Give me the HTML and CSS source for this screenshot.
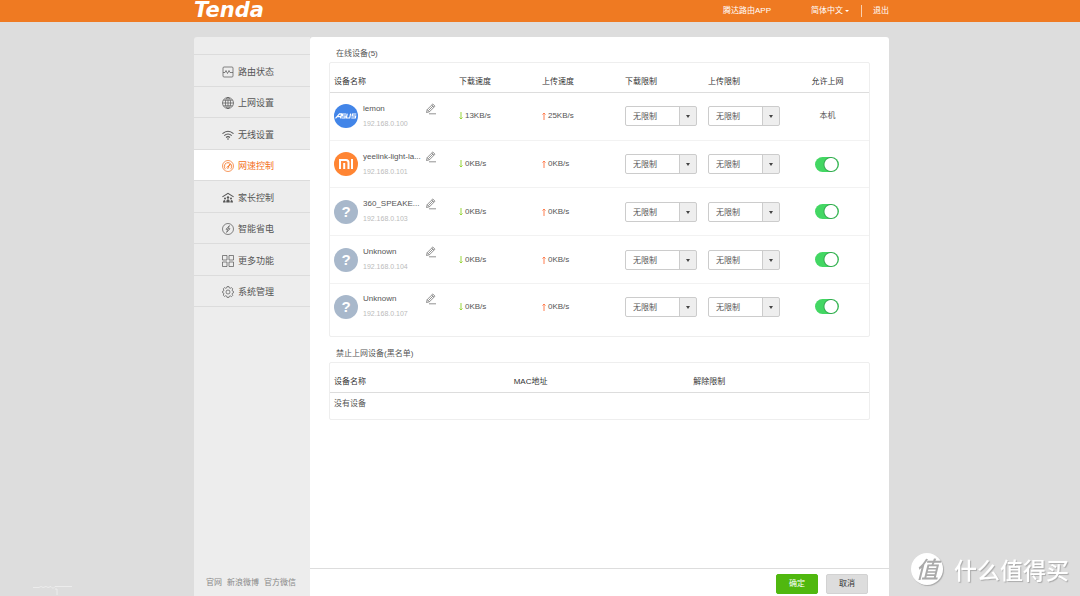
FILE: index.html
```html
<!DOCTYPE html>
<html lang="zh-CN">
<head>
<meta charset="utf-8">
<title>Tenda</title>
<link rel="stylesheet" href="styles.css">
</head>
<body>
<header class="topbar">
  <div class="wrap topbar-inner">
    <a class="logo" href="#">Tenda</a>
    <nav class="top-links">
      <a class="app-link" href="#">腾达路由APP</a>
      <button class="lang" type="button">简体中文<span class="caret"></span></button>
      <a class="logout" href="#">退出</a>
    </nav>
  </div>
</header>

<div class="wrap page">
  <aside class="sidebar">
    <nav class="menu">
      <a href="#"><svg viewBox="0 0 12 12"><rect x="1" y="1" width="10" height="10" rx="1"/><path d="M1 6.500h2l1-2 1.500 3 1.500-3 1 2h3"/></svg>路由状态</a>
      <a href="#"><svg viewBox="0 0 12 12"><circle cx="6" cy="6" r="5.500"/><ellipse cx="6" cy="6" rx="2.600" ry="5.500"/><path d="M6 .5v11M.5 6h11M1.300 3.200h9.400M1.300 8.800h9.400"/></svg>上网设置</a>
      <a href="#"><svg viewBox="0 0 12 12"><path class="bold" d="M.5 4.600Q6-.2 11.500 4.600M2.300 6.600Q6 3.300 9.700 6.600M4.100 8.500Q6 6.800 7.900 8.500"/><circle class="solid" cx="6" cy="10" r=".8"/></svg>无线设置</a>
      <a class="active" href="#"><svg viewBox="0 0 12 12"><circle cx="6" cy="6" r="5.500"/><path d="M3.600 9.200A3.700 3.700 0 1 1 8.400 9.200M2.300 6h1M6 2.300v1M3.400 3.400l.7.7M9.700 6h-1"/><path class="bold" d="M8.400 3.800L6 7"/><circle cx="5.800" cy="7.500" r=".9"/></svg>网速控制</a>
      <a href="#"><svg viewBox="0 0 12 12"><path class="bold" d="M.4 4.900L6 1.400l5.600 3.500"/><circle class="solid" cx="6" cy="5.500" r="1.200"/><circle class="solid" cx="3" cy="6.500" r="1"/><circle class="solid" cx="9" cy="6.500" r="1"/><path class="solid" d="M4.200 10.500c0-4.300 3.600-4.300 3.600 0zM1 10.500c0-3.400 2.700-3.400 2.700 0zM8.300 10.500c0-3.400 2.700-3.400 2.700 0z"/></svg>家长控制</a>
      <a href="#"><svg viewBox="0 0 12 12"><circle cx="6" cy="6" r="5.500"/><path d="M7.400 2.600L4 6.300h1.800L4.600 9.400 8 5.700H6.200z"/></svg>智能省电</a>
      <a href="#"><svg viewBox="0 0 12 12"><path d="M.5.500h4.500v4.500H.5zM7 .5h4.500v4.500H7zM.5 7h4.500v4.500H.5zM7 7h4.500v4.500H7z"/></svg>更多功能</a>
      <a href="#"><svg viewBox="0 0 12 12"><path d="M5 .6h2l.3 1.300 1 .4 1.200-.7 1.300 1.300-.7 1.200.4 1 1 .3v1.400l-1 .3-.4 1 .7 1.200-1.300 1.300-1.200-.7-1 .4L7 11.400H5l-.3-1.300-1-.4-1.200.7-1.300-1.300.7-1.200-.4-1-1-.3V5.400l1-.3.4-1-.7-1.200 1.300-1.300 1.200.7 1-.4z"/><circle cx="6" cy="6" r="2"/></svg>系统管理</a>
    </nav>
    <div class="site-links"><a href="#">官网</a><a href="#">新浪微博</a><a href="#">官方微信</a></div>
  </aside>

  <main class="content">
    <div class="panels">
      <section>
        <h2>在线设备(5)</h2>
        <div class="panel online">
          <table class="devices">
            <thead><tr><th class="name-col">设备名称</th><th>下载速度</th><th>上传速度</th><th>下载限制</th><th>上传限制</th><th class="allow">允许上网</th></tr></thead>
            <tbody id="device-rows"></tbody>
          </table>
        </div>
      </section>
      <section>
        <h2>禁止上网设备(黑名单)</h2>
        <div class="panel">
          <table class="blocked">
            <thead><tr><th>设备名称</th><th>MAC地址</th><th>解除限制</th></tr></thead>
            <tbody><tr><td colspan="3">没有设备</td></tr></tbody>
          </table>
        </div>
      </section>
    </div>
    <footer class="actions"><button class="ok" type="button">确定</button><button type="button">取消</button></footer>
  </main>
</div>

<svg class="trace" viewBox="0 0 40 10"><path d="M0 1.500h6l2-1 2 1 3-1 2 1 3-1 2 2 2-2h17M22 3h2v6"/></svg>
<div class="watermark"><span class="badge">值</span><span>什么值得买</span></div>
<script src="app.js"></script>
</body>
</html>
```

FILE: styles.css
```css
* { box-sizing: border-box; }

body {
  margin: 0;
  min-height: 100vh;
  display: flex;
  flex-direction: column;
  background: #ddd;
  color: #555;
  font: 8px/12px "Liberation Sans", "Noto Sans CJK SC", sans-serif;
}

a { color: inherit; text-decoration: none; }
button, select { font: inherit; color: inherit; }

.wrap {
  width: 100%;
  max-width: 698px;
  margin: 0 auto;
  padding-left: 3px;
  display: flex;
}

.topbar { background: #ef7a22; color: #fff; }
.topbar-inner { height: 22px; align-items: center; justify-content: space-between; }
.logo { padding-bottom: 2px; font: italic bold 21px/20px "DejaVu Sans", sans-serif; }
.top-links { display: flex; align-items: center; }
.app-link { margin-right: 40px; }
.lang {
  display: flex;
  align-items: center;
  gap: 2px;
  padding: 0 12px 0 0;
  border: 0;
  border-right: 1px solid #f9d0b0;
  background: none;
}
.caret {
  border: 2px solid transparent;
  border-top-color: currentColor;
  border-bottom: 0;
}
.logout { padding-left: 11px; }

.page { flex: 1; margin-top: 15px; }

.sidebar {
  width: 116px;
  display: flex;
  flex-direction: column;
  justify-content: space-between;
  padding-top: 17px;
  background: #ededed;
  border-radius: 3px 0 0 0;
}
.menu {
  height: 253px;
  display: grid;
  grid-auto-rows: 1fr;
  border-top: 1px solid #dcdcdc;
  font-size: 9px;
}
.menu a {
  display: flex;
  align-items: center;
  gap: 4px;
  padding: 3px 0 0 28px;
  border-bottom: 1px solid #dcdcdc;
}
.menu .active { background: #fff; color: #f36f1b; }
.menu svg {
  width: 12px;
  height: 12px;
  fill: none;
  stroke: currentColor;
  stroke-width: .7;
}
.menu .bold { stroke-width: 1.1; }
.menu .solid { fill: currentColor; stroke: none; }
.site-links { display: flex; gap: 5px; padding: 0 12px 7px; color: #888; }

.content {
  flex: 1;
  display: flex;
  flex-direction: column;
  background: #fff;
  border-radius: 3px 3px 0 0;
}
.panels { flex: 1; padding: 8px 19px; }
h2 { margin: 0; padding: 3px 7px 2px; font-size: 8px; font-weight: 400; }
.panel { border: 1px solid #eee; border-radius: 2px; }
.online { padding-bottom: 6px; margin-bottom: 8px; }

table { width: 100%; table-layout: fixed; border-collapse: separate; border-spacing: 0; }
th, td { padding: 0 0 0 4px; text-align: left; font-weight: 400; }
th { height: 30px; padding-top: 8px; color: #333; border-bottom: 1px solid #ddd; }
.devices { height: 267px; }
.devices .name-col { width: 23%; }
.devices th, .devices td { padding-left: 5px; }
.devices .name-col, .devices td:first-child { padding-left: 4px; }
.devices td { border-bottom: 1px solid #f2f2f2; }
.devices tr:last-child td { border-bottom: 0; }
.devices .allow { padding-left: 0; text-align: center; }
.blocked td { height: 26px; padding-bottom: 4px; }

.device { display: grid; grid-template-columns: 24px auto 12px; justify-content: start; column-gap: 5px; align-items: center; }
.device-text { width: 57px; white-space: nowrap; }
.avatar { width: 24px; height: 24px; border-radius: 50%; background: #a8b8cb; }
.avatar text { fill: #fff; font: bold 15px "Liberation Sans", sans-serif; text-anchor: middle; }
.avatar path { fill: none; stroke: #fff; stroke-width: 1.2; }
.asus { background: #4285e8; }
.mi { background: #ff8533; }
.avatar.mi path { stroke-width: 2; }
.title { display: block; }
.ip { display: block; padding-top: 3px; color: #bbb; font-size: 7px; }
.edit { align-self: start; padding: 0; border: 0; background: none; height: 12px; }
.edit svg { display: block; width: 12px; height: 12px; fill: none; stroke: #777; stroke-width: .8; }

.speed { display: flex; align-items: center; gap: 2px; }
.speed svg { width: 4px; height: 8px; fill: none; stroke: #98d53d; }
.speed .up { stroke: #ff7f50; }

.picker {
  position: relative;
  display: block;
  width: 72px;
  border: 1px solid #ccc;
  border-radius: 2px;
  background: linear-gradient(to left, #eee 16px, #ccc 16px, #ccc 17px, #fff 17px);
}
.picker select {
  display: block;
  width: 100%;
  height: 18px;
  padding: 2px 18px 0 7px;
  border: 0;
  appearance: none;
  background: none;
}
.picker::after {
  content: "";
  position: absolute;
  right: 6px;
  top: 8px;
  border: 2px solid transparent;
  border-top: 3px solid #444;
  border-bottom: 0;
  pointer-events: none;
}
.toggle {
  display: block;
  width: 24px;
  height: 15px;
  margin: 0 auto;
  border-radius: 8px;
  appearance: none;
  background: radial-gradient(circle at 16px 50%, #fff 6px, #35a950 7px, #43d763 8px);
}

.actions {
  display: flex;
  justify-content: flex-end;
  gap: 8px;
  padding: 5px 21px 2px;
  border-top: 1px solid #ddd;
}
.actions button {
  width: 42px;
  height: 20px;
  padding: 0;
  border: 1px solid #d2d2d2;
  border-radius: 2px;
  background: #ddd;
  color: #333;
}
.actions .ok { background: #50b80f; border-color: #50b80f; color: #fff; }

.watermark {
  position: fixed;
  right: 11px;
  bottom: 11px;
  display: flex;
  align-items: center;
  gap: 11px;
  color: #fff;
  font: 500 23px/30px "Noto Sans CJK SC", sans-serif;
  text-shadow: 1px 1px 1px #aaa;
}
.badge {
  width: 32px;
  height: 32px;
  border-radius: 50%;
  background: #fff;
  box-shadow: 1px 1px 1px #aaa;
  color: #aaa;
  text-align: center;
  font-style: italic;
  line-height: 30px;
  text-shadow: none;
}
.trace {
  position: fixed;
  left: 33px;
  bottom: 0;
  width: 40px;
  height: 10px;
  fill: none;
  stroke: #f2f2f2;
  stroke-width: .7;
}
```

FILE: app.js
```js
const devices = [
  { name: 'lemon', ip: '192.168.0.100', down: '13KB/s', up: '25KB/s', brand: 'asus', local: true },
  { name: 'yeelink-light-la...', ip: '192.168.0.101', down: '0KB/s', up: '0KB/s', brand: 'mi' },
  { name: '360_SPEAKE...', ip: '192.168.0.103', down: '0KB/s', up: '0KB/s' },
  { name: 'Unknown', ip: '192.168.0.104', down: '0KB/s', up: '0KB/s' },
  { name: 'Unknown', ip: '192.168.0.107', down: '0KB/s', up: '0KB/s' }
];

const marks = {
  asus: '<path d="M1.500 14.300L5.500 9.800H7.500L6.500 14.300M3.500 12.600H6.500M12 10H8.700L8.300 12H11.300L10.900 14H7.500M13.200 9.700L12.400 14H15.700L16.600 9.700M22.300 10H18.500L18.100 12H21.700L21.300 14H17.300"/>',
  mi: '<path d="M6 17V8h6q2.500 0 2.500 2.500V17M10.200 11v6M18 7v10"/>',
  other: '<text x="12" y="17">?</text>'
};

const picker = label =>
  `<span class="picker"><select aria-label="${label}"><option>无限制</option></select></span>`;

document.getElementById('device-rows').innerHTML = devices.map(d => `
  <tr>
    <td><div class="device">
      <svg class="avatar ${d.brand || ''}" viewBox="0 0 24 24">${marks[d.brand || 'other']}</svg>
      <div class="device-text"><span class="title">${d.name}</span><span class="ip">${d.ip}</span></div>
      <button class="edit" type="button" aria-label="编辑"><svg viewBox="0 0 12 12"><path d="M1.500 9.500l.7-2.900L7.800 1l2.200 2.200-5.600 5.600zM6.800 2l2.200 2.200M2.200 6.600l2.200 2.200M3.500 7.500l4.500-4.500M4 10.800h7"/></svg></button>
    </div></td>
    <td><div class="speed"><svg viewBox="0 0 4 8"><path d="M2 0v7M.5 5.500L2 7l1.500-1.500"/></svg>${d.down}</div></td>
    <td><div class="speed"><svg class="up" viewBox="0 0 4 8"><path d="M2 8V1M.5 2.500L2 1l1.500 1.500"/></svg>${d.up}</div></td>
    <td>${picker('下载限制')}</td>
    <td>${picker('上传限制')}</td>
    <td class="allow">${d.local ? '本机' : '<input class="toggle" type="checkbox" checked aria-label="允许上网">'}</td>
  </tr>`).join('');
```
